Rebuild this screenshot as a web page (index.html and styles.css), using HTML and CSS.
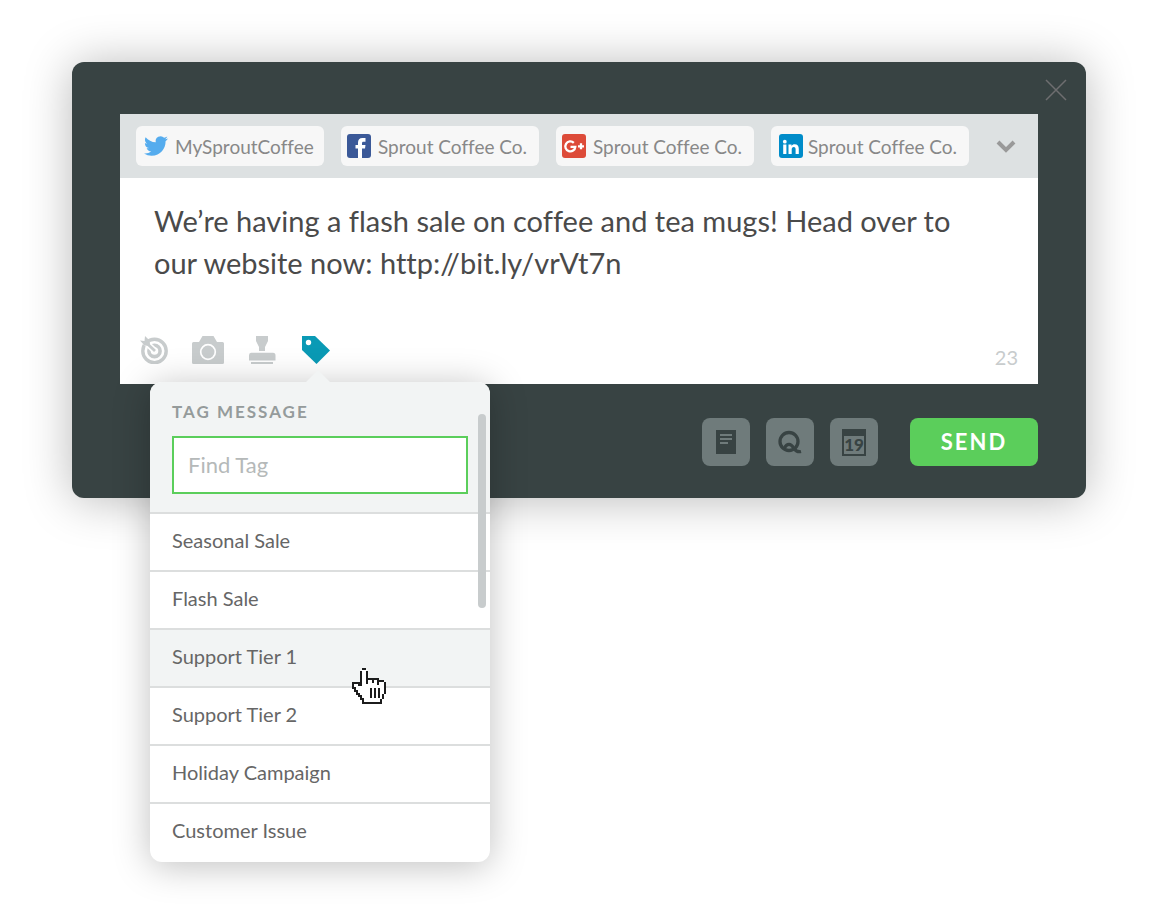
FILE: index.html
```html
<!DOCTYPE html>
<html lang="en">
<head>
<meta charset="utf-8">
<title>Compose message</title>
<link rel="stylesheet" href="styles.css">
</head>
<body>
<main class="compose">
  <button class="close" type="button" aria-label="Close">
    <svg width="22" height="22" viewBox="0 0 22 22"><path d="M1 1L21 21M21 1L1 21" stroke="#6e6e70" stroke-width="1.500" fill="none"/></svg>
  </button>

  <section class="editor">
    <div class="profiles">
      <button class="chip chip-twitter" type="button">
        <svg width="24" height="24" viewBox="0 0 24 24"><path fill="#55acee" d="M23.950 4.570a10 10 0 0 1-2.820.770 4.960 4.960 0 0 0 2.160-2.720c-.950.550-2 .960-3.130 1.190a4.920 4.920 0 0 0-8.380 4.480C7.690 8.100 4.070 6.130 1.640 3.160a4.820 4.820 0 0 0-.670 2.480c0 1.710.870 3.210 2.190 4.100a4.900 4.900 0 0 1-2.230-.620v.060a4.920 4.920 0 0 0 3.950 4.830 5 5 0 0 1-2.210.080 4.940 4.940 0 0 0 4.600 3.420A9.870 9.870 0 0 1 0 19.540a13.990 13.990 0 0 0 7.560 2.210c9.050 0 14-7.500 14-13.980 0-.210 0-.420-.020-.630a9.940 9.940 0 0 0 2.460-2.550z"/></svg>
        <span>MySproutCoffee</span>
      </button>
      <button class="chip" type="button">
        <svg width="24" height="24" viewBox="0 0 24 24"><rect width="24" height="24" rx="3" fill="#3b5998"/><path fill="#fff" d="M11 24v-9.500H8.500v-3.500H11V8.700C11 5.600 12.500 4 15.400 4H18.500v3.800h-2c-1.200 0-1.500.5-1.500 1.600V11h3.500l-.5 3.500h-3V24z"/></svg>
        <span>Sprout Coffee Co.</span>
      </button>
      <button class="chip" type="button">
        <svg width="24" height="24" viewBox="0 0 24 24"><rect width="24" height="24" rx="3" fill="#dd4b39"/><path d="M11.800 8.800A5 5 0 1 0 13.300 12.800H8.500M16 12.300h6M19 9.300v6" fill="none" stroke="#fff" stroke-width="2.300"/></svg>
        <span>Sprout Coffee Co.</span>
      </button>
      <button class="chip chip-linkedin" type="button">
        <svg width="24" height="24" viewBox="0 0 24 24"><rect width="24" height="24" rx="3" fill="#008cc9"/><circle cx="5.800" cy="7.700" r="1.900" fill="#fff"/><path fill="#fff" d="M4.200 10.500h3.200V20H4.200zM9.500 10.500h3v1.400c.6-1 1.700-1.600 3.100-1.600 3 0 4.200 1.700 4.200 4.700v5h-3.200v-4.700c0-1.500-.4-2.400-1.800-2.400-1.500 0-2.100 1-2.100 2.500V20H9.500z"/></svg>
        <span>Sprout Coffee Co.</span>
      </button>
      <button class="more" type="button" aria-label="More profiles">
        <svg width="20" height="14" viewBox="0 0 20 14"><path d="M2 3L10 11L18 3" fill="none" stroke="#999" stroke-width="4"/></svg>
      </button>
    </div>

    <textarea class="message" aria-label="Message" rows="2" spellcheck="false">We’re having a flash sale on coffee and tea mugs! Head over to our website now: http://bit.ly/vrVt7n</textarea>

    <div class="toolbar">
      <button class="tool" type="button" aria-label="Targeting">
        <svg width="28" height="28" viewBox="0 0 28 28"><g fill="none" stroke="#c8cccd"><circle cx="14.500" cy="15" r="11.700" stroke-width="3.400"/><circle cx="14.500" cy="15" r="5.600" stroke-width="3.600"/></g><path d="M1 2L15 15" stroke="#fff" stroke-width="6"/><path d="M5 5.500L15 15" stroke="#c8cccd" stroke-width="2.800"/><path d="M0 4.500L4.500 5L5 0L9.800 4.800L10 10L4.500 9.500z" fill="#c8cccd"/></svg>
      </button>
      <button class="tool" type="button" aria-label="Add photo">
        <svg width="32" height="28" viewBox="0 0 32 28"><path fill="#c8cccd" d="M1.500 6H7L10.500 0h11L25 6h5.500Q32 6 32 7.500v19Q32 28 30.500 28h-29Q0 28 0 26.500v-19Q0 6 1.500 6z"/><circle cx="16" cy="16" r="7.300" fill="none" stroke="#fff" stroke-width="1.700"/></svg>
      </button>
      <button class="tool" type="button" aria-label="Saved replies">
        <svg width="28" height="28" viewBox="0 0 28 28"><path fill="#c8cccd" d="M8 0h12v5l-3 6v4h-6v-4L8 5zM3 16.700h22q2.500 0 2.500 2.500V24.500H1v-5.300Q1 16.700 3 16.700zM3 26h22v2H3z"/></svg>
      </button>
      <div class="tag-tool">
        <button class="tool" type="button" aria-label="Tag message" aria-expanded="true">
          <svg width="32" height="28" viewBox="0 0 32 28"><path fill="#0a9ab5" d="M2 0h13L30 14.500L16.500 28L2 14z"/><circle cx="8.500" cy="6.500" r="2.700" fill="#fff"/></svg>
        </button>
        <div class="popover">
          <div class="popover-head">
            <label class="popover-title" for="find-tag">TAG MESSAGE</label>
            <input class="find" id="find-tag" type="text" placeholder="Find Tag">
          </div>
          <ul class="tags">
            <li><button class="tag" type="button">Seasonal Sale</button></li>
            <li><button class="tag" type="button">Flash Sale</button></li>
            <li><button class="tag tag-hover" type="button">Support Tier 1</button></li>
            <li><button class="tag" type="button">Support Tier 2</button></li>
            <li><button class="tag" type="button">Holiday Campaign</button></li>
            <li><button class="tag tag-last" type="button">Customer Issue</button></li>
          </ul>
          <div class="scroll-thumb"></div>
          <svg class="pointer" width="34" height="36" viewBox="0 0 34 36"><path d="M11 35V31L1 20V15H6L9 18V3L10 1H14L15 3V11H26V13H32L33 14V26L31 27V31H29V35z" fill="#fff"/><path d="M11 36V31H9V28H7V26H5V23H3V20H1V15H7V17H9V3M10 1H14M15 3V16M15 11H26V13H32M21 11V15M26 13V17M33 14V26M31 26V31M29 31V35H11M19 20V30M23 20V30M27 20V30" fill="none" stroke="#1c1c1c" stroke-width="2"/></svg>
        </div>
      </div>
      <span class="count">23</span>
    </div>
  </section>

  <footer class="actions">
    <button class="action" type="button" aria-label="Drafts">
      <svg width="20" height="24" viewBox="0 0 20 24"><path fill="#384343" d="M0 0h20v24H0z"/><path d="M4 5h12M4 9h12M4 13h8" stroke="#6f7b7b" stroke-width="2"/></svg>
    </button>
    <button class="action" type="button" aria-label="Queue">
      <svg width="24" height="24" viewBox="0 0 24 24"><g fill="none" stroke="#384343" stroke-width="3.300"><circle cx="11" cy="11.500" r="9"/><path d="M6.500 18Q8 14.300 11 14.300Q13.500 14.300 16 18.500Q19 22.500 23 21.500"/></g></svg>
    </button>
    <button class="action" type="button" aria-label="Schedule">
      <svg width="24" height="27" viewBox="0 0 24 27"><path fill="#384343" fill-rule="evenodd" d="M0 0h24v27H0zM2 7v18h20V7z"/><text class="day" x="12" y="22" text-anchor="middle">19</text></svg>
    </button>
    <button class="send" type="button">SEND</button>
  </footer>
</main>
</body>
</html>
```
FILE: styles.css
```css
* { box-sizing: border-box; }

body {
  min-height: 100vh;
  margin: 0;
  padding: 62px 74px 58px 72px;
  background: #fff;
  color: #4a4a4a;
  font-family: Lato, "Open Sans", sans-serif;
  font-variant-ligatures: none;
}

button {
  padding: 0;
  border: 0;
  background: none;
  font: inherit;
  font-variant-ligatures: none;
  cursor: pointer;
}

svg { display: block; flex: none; }

.compose {
  position: relative;
  margin-bottom: 364px;
  padding: 52px 48px 32px;
  border-radius: 12px;
  background: #384343;
  box-shadow: 0 2px 48px rgba(0, 0, 0, 0.28);
}

.close {
  position: absolute;
  top: 17px;
  right: 19px;
}

.editor { background: #fff; }

.profiles {
  display: flex;
  align-items: center;
  gap: 17px;
  padding: 12px 16px;
  background: #dde1e2;
}

.chip {
  display: flex;
  align-items: center;
  gap: 7px;
  flex: 0 1 198px;
  height: 40px;
  padding: 0 6px;
  border-radius: 6px;
  background: #f7f7f7;
  color: #888;
  font-size: 19px;
  white-space: nowrap;
}

.chip-twitter { flex-basis: 188px; padding: 0 8px; }
.chip-linkedin { padding: 0 8px; gap: 5px; }

.more { margin: 0 6px 0 auto; }

.message {
  display: block;
  width: 100%;
  height: 158px;
  padding: 22px 48px 0 34px;
  border: 0;
  outline: 0;
  resize: none;
  background: transparent;
  color: #4a4a4a;
  font: inherit;
  font-size: 29px;
  font-variant-ligatures: none;
  line-height: 42px;
}

.toolbar {
  display: flex;
  gap: 24px;
  height: 48px;
  padding: 0 20px 20px;
}

.tool { display: block; }

.count {
  margin-left: auto;
  color: #c8cccd;
  font-size: 20px;
  line-height: 42px;
}

.tag-tool { position: relative; }

.popover {
  position: absolute;
  z-index: 1;
  top: 46px;
  left: -150px;
  width: 340px;
  border-radius: 12px;
  background: #fff;
  box-shadow: 0 4px 36px rgba(0, 0, 0, 0.25);
}

.popover::before {
  content: "";
  position: absolute;
  top: -12px;
  left: 156px;
  border: 12px solid transparent;
  border-top: 0;
  border-bottom-color: #f2f4f4;
}

.popover-head {
  padding: 18px 22px;
  border-radius: 12px 12px 0 0;
  background: #f2f4f4;
}

.popover-title {
  display: block;
  margin-bottom: 12px;
  color: #959b9b;
  font-size: 17px;
  font-weight: 700;
  letter-spacing: 2px;
  line-height: 24px;
}

.find {
  display: block;
  width: 100%;
  height: 58px;
  padding: 0 14px 2px;
  border: 2px solid #5bce5b;
  border-radius: 0;
  outline: 0;
  background: #fff;
  font: inherit;
  font-size: 22px;
}

.find::placeholder { color: #b5b9b9; opacity: 1; }

.tags {
  margin: 0;
  padding: 0;
  list-style: none;
}

.tag {
  display: block;
  width: 100%;
  height: 58px;
  padding: 0 22px 4px;
  border-top: 2px solid #dcdede;
  color: #666;
  font-size: 20px;
  text-align: left;
}

.tag-hover { background: #f2f4f4; }
.tag-last { height: 60px; padding-bottom: 6px; }

.scroll-thumb {
  position: absolute;
  top: 32px;
  right: 4px;
  width: 8px;
  height: 194px;
  border-radius: 4px;
  background: #c8cccd;
}

.pointer {
  position: absolute;
  top: 286px;
  left: 202px;
}

.actions {
  display: flex;
  justify-content: flex-end;
  gap: 16px;
  margin-top: 34px;
}

.action {
  display: flex;
  align-items: center;
  justify-content: center;
  width: 48px;
  height: 48px;
  border-radius: 8px;
  background: #6f7b7b;
}

.day {
  fill: #384343;
  font-size: 17px;
  font-weight: 900;
}

.send {
  width: 128px;
  height: 48px;
  margin-left: 16px;
  padding-bottom: 2px;
  border-radius: 8px;
  background: #5bce5b;
  color: #fff;
  font-size: 22px;
  font-weight: 700;
  letter-spacing: 2px;
}
```
